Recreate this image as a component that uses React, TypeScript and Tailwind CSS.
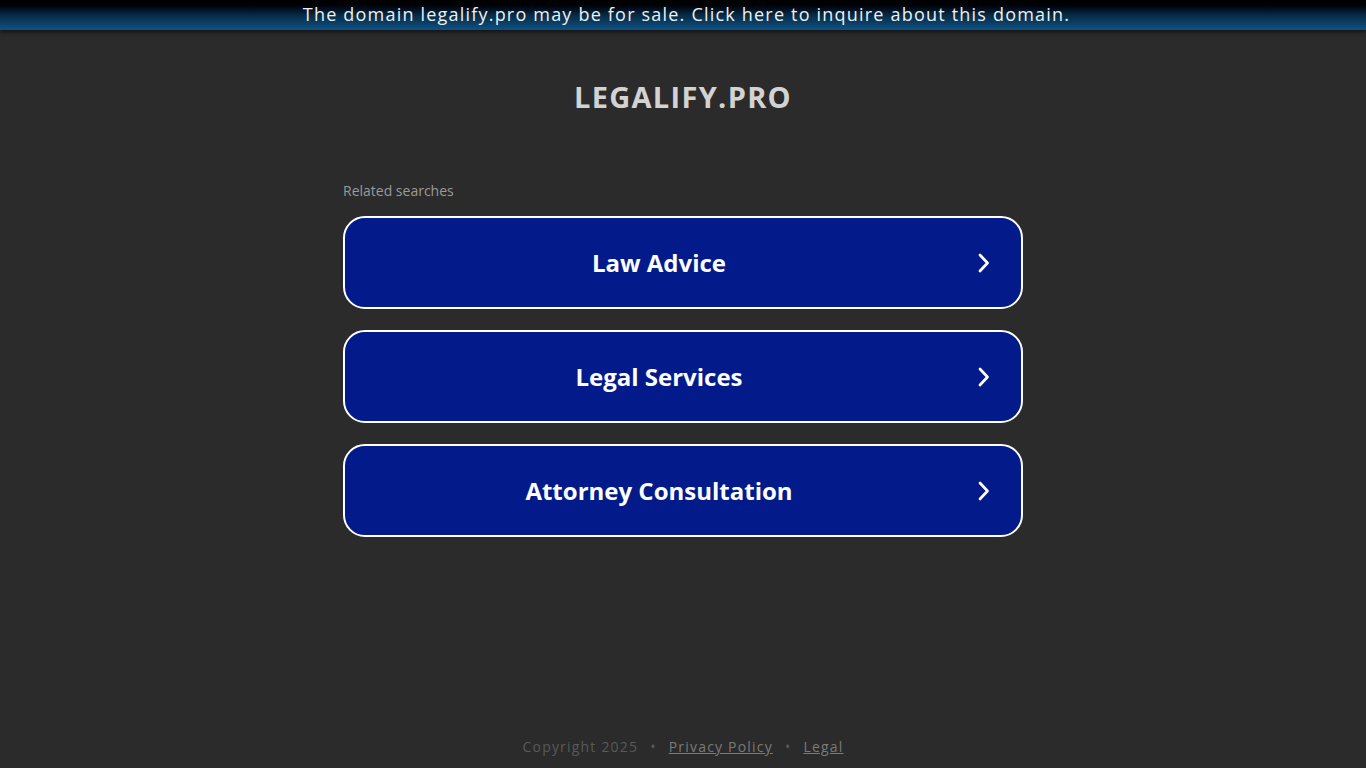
import React from "react";

const items = ["Law Advice", "Legal Services", "Attorney Consultation"];

function Chevron() {
  return (
    <svg width="16" height="24" viewBox="0 0 16 24" fill="none">
      <path d="M5 4 L12.5 12 L5 20" stroke="white" strokeWidth="2.7" strokeLinecap="round" strokeLinejoin="round" />
    </svg>
  );
}

export default function App() {
  return (
    <div
      className="min-h-[768px] h-[768px] w-full bg-[#2b2b2b] flex flex-col"
      style={{ fontFamily: '"Open Sans", "Liberation Sans", sans-serif' }}
    >
      <div className="h-[30px] w-full bg-gradient-to-b from-[#000000] via-[#072a45] to-[#0e5284] shadow-[0_2px_4px_rgba(0,0,0,0.6)] flex items-center justify-center">
        <span className="text-[18px] leading-none text-[#f0f0f0] tracking-[1.2px] -mt-[2px] pl-[7px]">
          The domain legalify.pro may be for sale. Click here to inquire about this domain.
        </span>
      </div>

      <div className="flex justify-center mt-[49px]">
        <h1 className="text-[29px] leading-[36px] font-bold text-[#d3d3d3] tracking-[1.3px]">LEGALIFY.PRO</h1>
      </div>

      <div className="w-[680px] mx-auto mt-[67px]">
        <div className="text-[14px] leading-[18px] text-[#9a9a9a] mb-[16px]">Related searches</div>
        <div className="flex flex-col gap-[21px]">
          {items.map((t) => (
            <div
              key={t}
              className="h-[93px] rounded-[22px] border-2 border-white bg-[#021a8a] flex items-center pl-[22px] pr-[30px]"
            >
              <div className="flex-1 text-center text-[24px] font-bold text-white leading-none">{t}</div>
              <div className="w-[40px] flex items-center justify-end">
                <Chevron />
              </div>
            </div>
          ))}
        </div>
      </div>

      <div className="mt-auto mb-[11px] flex justify-center items-center text-[14px] leading-[20px] tracking-[1.2px] text-[#595959]">
        <span>Copyright 2025</span>
        <span className="mx-[12px]">•</span>
        <span className="underline text-[#7a7a7a]">Privacy Policy</span>
        <span className="mx-[12px]">•</span>
        <span className="underline text-[#7a7a7a]">Legal</span>
      </div>
    </div>
  );
}
